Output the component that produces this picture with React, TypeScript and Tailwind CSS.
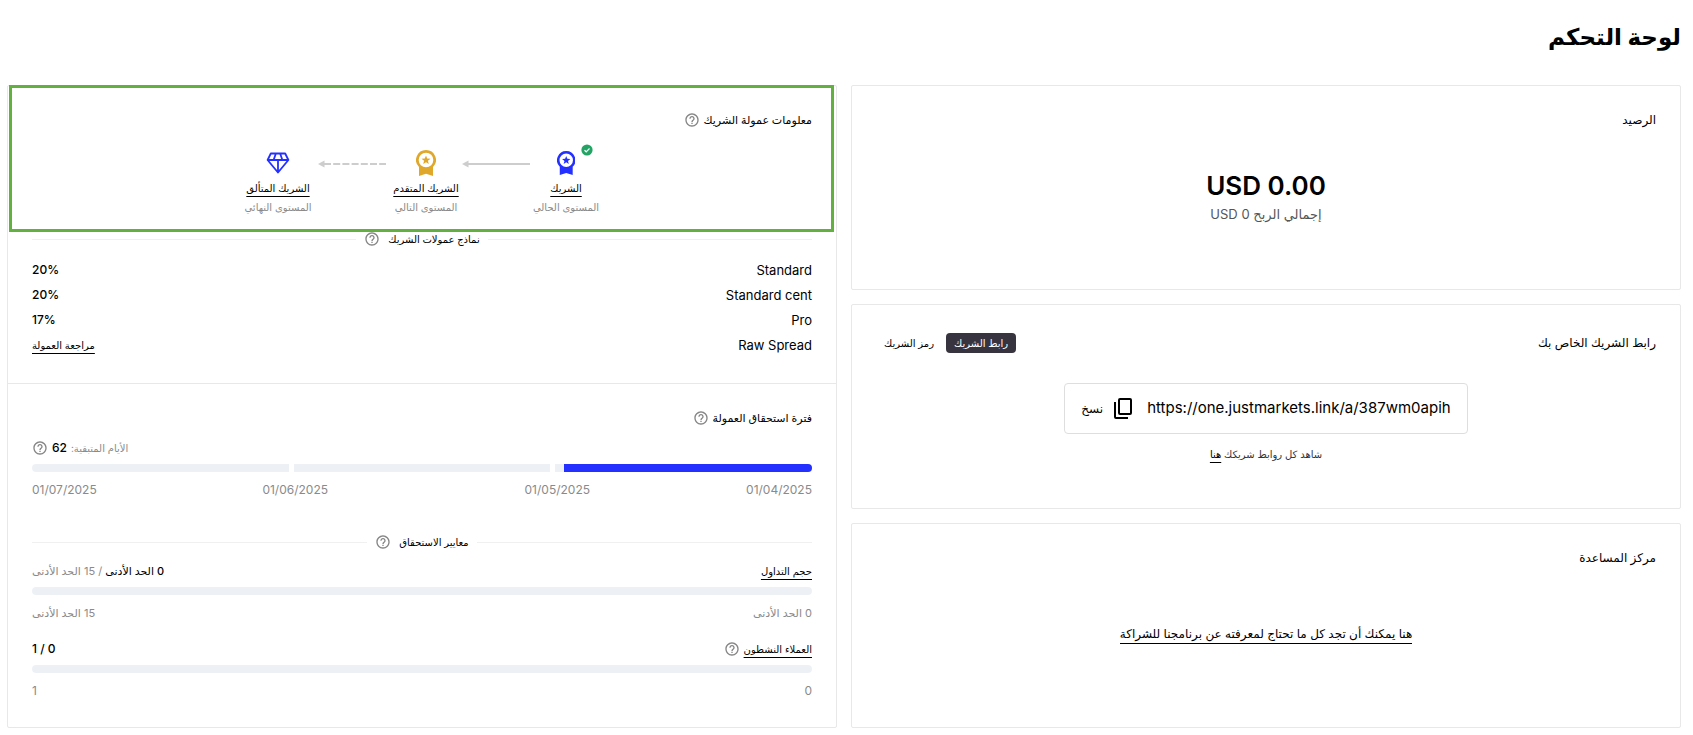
import type { ReactNode } from 'react';
import { MdHelpOutline } from 'react-icons/md';

function Help() {
  return (
    <button type="button" aria-label="مساعدة" className="shrink-0 text-[#858585]">
      <MdHelpOutline size={16} />
    </button>
  );
}

function Medal({ size, className }: { size: 'md' | 'lg'; className: string }) {
  return (
    <svg viewBox="0 0 20 26" className={`${size === 'lg' ? 'h-[26px]' : 'h-6'} ${className}`} fill="currentColor" aria-hidden="true">
      <path fillRule="evenodd" d="M10 0a10 10 0 0 1 7 17.100V26l-7-2.200L3 26V17.100A10 10 0 0 1 10 0Zm0 2.700a7.300 7.300 0 1 0 0 14.600a7.300 7.300 0 0 0 0-14.600Z" />
      <path d="M10 5.400l1.200 3.100 3.300.2-2.600 2.100.9 3.200L10 12.200 7.200 14l.9-3.200-2.600-2.100 3.300-.2Z" />
    </svg>
  );
}

function Diamond() {
  return (
    <svg viewBox="0 0 24 22" className="h-[22px] w-6 text-[#2430ff]" fill="none" stroke="currentColor" strokeWidth="1.800" strokeLinejoin="round" aria-hidden="true">
      <path d="M4.800 1.500h14.400L22.400 8 12 20.500 1.600 8Z M1.600 8h20.800 M12 8v12 M9.800 1.800L7.600 8 M14.200 1.800L16.400 8" />
    </svg>
  );
}

function Arrow({ dashed = false }: { dashed?: boolean }) {
  return (
    <svg viewBox="0 0 68 8" className={`mt-3 h-2 w-[68px] shrink-0 ${dashed ? 'mx-1' : ''}`} fill="#cdcdcd" aria-hidden="true">
      <path d="M0 4L6.500 .5v7Z" />
      <path d="M6 4H68" stroke="#cdcdcd" strokeWidth="2" strokeDasharray={dashed ? '7 2.200' : undefined} />
    </svg>
  );
}

function Level({ icon, name, note, current = false }: { icon: ReactNode; name: string; note: string; current?: boolean }) {
  return (
    <li className="flex w-[60px] flex-col items-center whitespace-nowrap">
      <div className="relative flex h-[30px] items-center">
        {icon}
        {current && (
          <svg viewBox="0 0 12 12" className="absolute -top-1 -right-[18px] size-3" aria-hidden="true">
            <circle cx="6" cy="6" r="5.600" fill="#22a464" />
            <path d="M3.500 6.200l1.700 1.600L8.500 4.500" fill="none" stroke="#fff" strokeWidth="1.200" />
          </svg>
        )}
      </div>
      <a href="#" className="text-[10px] leading-5 underline underline-offset-4">{name}</a>
      <span className="text-[10px] leading-[18px] text-[#8a8a8a]">{note}</span>
    </li>
  );
}

function Divider({ children }: { children: ReactNode }) {
  return (
    <div className="flex items-center gap-2">
      <span className="h-px flex-1 bg-[#f0f0f0]" />
      <h3 className="text-[10px] leading-4 font-medium">{children}</h3>
      <Help />
      <span className="h-px flex-1 bg-[#f0f0f0]" />
    </div>
  );
}

const models = [
  ['Standard', '20%'],
  ['Standard cent', '20%'],
  ['Pro', '17%'],
];

export default function App() {
  return (
    <main dir="rtl" className="bg-white px-3 pt-[19px] pb-2 pl-[7px] font-['Inter','DejaVu_Sans',sans-serif] text-black">
      <h1 className="mb-[30px] text-[23px] leading-9 font-bold">لوحة التحكم</h1>
      <div className="grid grid-cols-2 gap-3.5">
        <div className="flex flex-col gap-3.5">
          <section className="flex h-[205px] flex-col rounded-xs border border-[#e8e8e8] px-6 pt-6">
            <h2 className="text-xs leading-5">الرصيد</h2>
            <div className="mt-[38px] text-center">
              <p dir="ltr" className="text-[26px] leading-9 font-semibold">USD 0.00</p>
              <p className="text-[13px] leading-5 text-[#555]">
                إجمالي الربح <span dir="ltr">USD 0</span>
              </p>
            </div>
          </section>

          <section className="flex h-[205px] flex-col rounded-xs border border-[#e8e8e8] px-6 pt-7">
            <div className="flex items-center justify-between">
              <h2 className="text-xs leading-5">رابط الشريك الخاص بك</h2>
              <div className="flex gap-1 text-[10px] leading-5">
                <button type="button" className="rounded-sm bg-[#37333f] px-2 text-white">رابط الشريك</button>
                <button type="button" className="px-2">رمز الشريك</button>
              </div>
            </div>
            <div className="mx-auto mt-[30px] flex h-[51px] items-center rounded-sm border border-[#dedede] px-4">
              <span dir="ltr" className="text-[15px]">https://one.justmarkets.link/a/387wm0apih</span>
              <button type="button" className="mr-3.5 flex items-center gap-2.5 text-xs">
                <svg viewBox="0 0 20 22" className="h-[22px] w-5" fill="none" stroke="currentColor" strokeWidth="2" strokeLinejoin="round" aria-hidden="true">
                  <rect x="6" y="1" width="12" height="15" rx="1" />
                  <path d="M2 4v15q0 1 1 1h12" />
                </svg>
                نسخ
              </button>
            </div>
            <p className="mt-2.5 text-center text-[10px] leading-5 text-[#333]">
              شاهد كل روابط شريكك <a href="#" className="text-black underline underline-offset-4">هنا</a>
            </p>
          </section>

          <section className="flex h-[205px] flex-col rounded-xs border border-[#e8e8e8] px-6 pt-6">
            <h2 className="text-xs leading-5">مركز المساعدة</h2>
            <a href="#" className="mx-auto mt-[57px] border-b border-black text-xs leading-[18px]">
              هنا يمكنك أن تجد كل ما تحتاج لمعرفته عن برنامجنا للشراكة
            </a>
          </section>
        </div>

        <section className="relative rounded-xs border border-[#e8e8e8]">
          <div className="pointer-events-none absolute -top-px right-0.5 left-px h-[147px] border-[3px] border-[#62b040]" />
          <div className="h-[298px] border-b border-[#e8e8e8] px-6 pt-6">
            <div className="flex items-center gap-1">
              <h2 className="text-[11px] leading-5 font-medium">معلومات عمولة الشريك</h2>
              <Help />
            </div>
            <ol className="mt-[18px] flex justify-center gap-1.5">
              <Level icon={<Medal size="md" className="text-[#2430ff]" />} name="الشريك" note="المستوى الحالي" current />
              <Arrow />
              <Level icon={<Medal size="lg" className="text-[#e0a82b]" />} name="الشريك المتقدم" note="المستوى التالي" />
              <Arrow dashed />
              <Level icon={<Diamond />} name="الشريك المتألق" note="المستوى النهائي" />
            </ol>
            <div className="mt-[15px]">
              <Divider>نماذج عمولات الشريك</Divider>
            </div>
            <table className="mt-2.5 w-full text-[13px] leading-5">
              <tbody>
                {models.map(([name, rate]) => (
                  <tr key={name} className="h-[25px]">
                    <th scope="row" className="py-0 text-right font-normal">{name}</th>
                    <td className="py-0 text-left text-xs font-medium">{rate}</td>
                  </tr>
                ))}
                <tr className="h-[25px]">
                  <th scope="row" className="py-0 text-right font-normal">Raw Spread</th>
                  <td className="py-0 text-left text-[10px]">
                    <a href="#" className="underline underline-offset-4">مراجعة العمولة</a>
                  </td>
                </tr>
              </tbody>
            </table>
          </div>

          <div className="px-6 pt-6">
            <div className="flex items-center gap-1">
              <h2 className="text-[11px] leading-5 font-medium">فترة استحقاق العمولة</h2>
              <Help />
            </div>
            <div className="mt-2.5 flex items-center justify-end gap-1 text-[10px] leading-5">
              <span className="text-[#8a8a8a]">الأيام المتبقية:</span>
              <span className="text-xs leading-5 font-medium">62</span>
              <Help />
            </div>
            <div className="mt-1.5 flex h-2 gap-[5px] overflow-hidden rounded-full">
              <span className="flex-1 bg-[#edf1f6]">
                <span className="block h-full w-[96.5%] bg-[#2430ff]" />
              </span>
              <span className="flex-1 bg-[#edf1f6]" />
              <span className="flex-1 bg-[#edf1f6]" />
            </div>
            <div className="mt-2 grid grid-cols-[222fr_262fr_296fr] text-xs leading-5 text-[#8a8a8a]">
              <span>01/04/2025</span>
              <span>01/05/2025</span>
              <span className="flex justify-between">
                <span>01/06/2025</span>
                <span>01/07/2025</span>
              </span>
            </div>
            <div className="mt-[34px]">
              <Divider>معايير الاستحقاق</Divider>
            </div>

            <div className="mt-[11px] flex items-center justify-between text-[11px] leading-5">
              <a href="#" className="text-[10px] underline underline-offset-4">حجم التداول</a>
              <span className="text-[#8a8a8a]">
                <span className="font-medium text-black">0 الحد الأدنى</span> / 15 الحد الأدنى
              </span>
            </div>
            <div className="mt-1.5 h-2 rounded-full bg-[#edf1f6]" />
            <div className="mt-2 flex justify-between text-[11px] leading-5 text-[#8a8a8a]">
              <span>0 الحد الأدنى</span>
              <span>15 الحد الأدنى</span>
            </div>

            <div className="mt-4 flex items-center justify-between leading-5">
              <span className="flex items-center gap-1 text-[10px]">
                <a href="#" className="underline underline-offset-4">العملاء النشطون</a>
                <Help />
              </span>
              <span dir="ltr" className="text-xs leading-5 font-medium">1 / 0</span>
            </div>
            <div className="mt-1.5 h-2 rounded-full bg-[#edf1f6]" />
            <div className="mt-2 flex justify-between text-xs leading-5 text-[#8a8a8a]">
              <span>0</span>
              <span>1</span>
            </div>
          </div>
        </section>
      </div>
    </main>
  );
}
